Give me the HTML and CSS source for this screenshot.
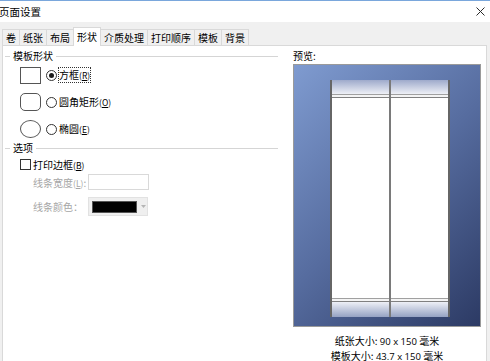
FILE: index.html
```html
<!DOCTYPE html>
<html lang="zh-CN">
<head>
    <meta charset="UTF-8">
    <title>页面设置</title>
    <link rel="stylesheet" href="styles.css">
</head>
<body>
    <div class="titlebar">
        <span class="title">页面设置</span>
        <svg class="close" viewBox="0 0 9 9" width="9" height="9">
            <path d="M0.5 0.5 L8.5 8.5 M8.5 0.5 L0.5 8.5" stroke="#2b2b2b" stroke-width="1" fill="none"/>
        </svg>
    </div>

    <div class="tabs">
        <span class="tab">卷</span>
        <span class="tab">纸张</span>
        <span class="tab">布局</span>
        <span class="tab active">形状</span>
        <span class="tab">介质处理</span>
        <span class="tab">打印顺序</span>
        <span class="tab">模板</span>
        <span class="tab">背景</span>
    </div>

    <div class="panel">
        <div class="left">
            <div class="group-title">模板形状</div>
            <div class="shapes">
                <div class="shape-row">
                    <span class="shape square"></span>
                    <span class="radio checked"></span>
                    <span class="label focus">方框<span class="key">(<u>R</u>)</span></span>
                </div>
                <div class="shape-row">
                    <span class="shape rounded"></span>
                    <span class="radio"></span>
                    <span class="label">圆角矩形<span class="key">(<u>O</u>)</span></span>
                </div>
                <div class="shape-row">
                    <span class="shape ellipse"></span>
                    <span class="radio"></span>
                    <span class="label">椭圆<span class="key">(<u>E</u>)</span></span>
                </div>
            </div>

            <div class="group-title options">选项</div>
            <div class="check-row">
                <span class="checkbox"></span>
                <span class="label">打印边框<span class="key">(<u>B</u>)</span></span>
            </div>
            <div class="field-row">
                <span class="field-label">线条宽度<span class="key">(<u>L</u>)</span>:</span>
                <span class="text-input"></span>
            </div>
            <div class="field-row color-row">
                <span class="field-label">线条颜色：</span>
                <span class="color-combo">
                    <span class="swatch"></span>
                    <svg class="arrow" viewBox="0 0 5 3" width="5" height="3">
                        <path d="M0 0 L2.5 3 L5 0 Z" fill="#b5b5b5"/>
                    </svg>
                </span>
            </div>
        </div>

        <div class="right">
            <div class="preview-label">预览:</div>
            <div class="preview">
                <div class="paper">
                    <div class="col">
                        <div class="strip-top"></div>
                        <div class="hline"></div>
                        <div class="sheet"></div>
                        <div class="hline"></div>
                        <div class="strip-bottom"></div>
                    </div>
                    <div class="divider"></div>
                    <div class="col">
                        <div class="strip-top"></div>
                        <div class="hline"></div>
                        <div class="sheet"></div>
                        <div class="hline"></div>
                        <div class="strip-bottom"></div>
                    </div>
                </div>
            </div>
            <div class="size-info">
                <div>纸张大小: <span class="num">90 x 150</span> 毫米</div>
                <div>模板大小: <span class="num">43.7 x 150</span> 毫米</div>
            </div>
        </div>
    </div>
</body>
</html>
```

FILE: styles.css
```css
body {
    margin: 0;
    height: 361px;
    overflow: hidden;
    background-color: #f0f0f0;
    font-family: "Noto Sans CJK SC", "DejaVu Sans", sans-serif;
    font-size: 10px;
    color: #000;
}

.titlebar {
    height: 21px;
    border-top: 1px solid #7aa7dc;
    background-color: #fff;
    display: flex;
    align-items: center;
    justify-content: space-between;
}

.title {
    font-size: 10.5px;
    line-height: 14px;
    margin-left: -1px;
}

.close {
    margin-right: 5px;
}

.tabs {
    display: flex;
    align-items: flex-end;
    height: 23px;
    padding-left: 3px;
}

.tab {
    height: 15px;
    line-height: 15px;
    padding: 0 3px;
    margin-left: -1px;
    font-size: 10px;
    border: 1px solid #d9d9d9;
    border-bottom: none;
    background-color: #f0f0f0;
}

.tab.active {
    height: 18px;
    line-height: 17px;
    margin-bottom: -1px;
    background-color: #fff;
    position: relative;
    z-index: 1;
}

.panel {
    display: flex;
    height: 330px;
    box-sizing: border-box;
    margin: 0 3px 0 2px;
    padding: 3px 0 0 2px;
    background-color: #fff;
    border: 1px solid #d9d9d9;
}

.left {
    width: 273px;
}

.group-title {
    display: flex;
    align-items: center;
    gap: 3px;
    height: 14px;
    line-height: 14px;
}

.group-title::before {
    content: "";
    width: 5px;
    border-top: 1px solid #d5d5d5;
}

.group-title::after {
    content: "";
    flex: 1;
    border-top: 1px solid #d5d5d5;
}

.group-title.options {
    margin-top: 3px;
}

.shapes {
    display: flex;
    flex-direction: column;
    gap: 9px;
    margin-top: 3px;
    padding-left: 15px;
}

.shape-row {
    display: flex;
    align-items: center;
    height: 18px;
}

.shape {
    width: 21px;
    height: 17px;
    box-sizing: border-box;
    border: 1px solid #555;
}

.shape.rounded {
    height: 18px;
    border-radius: 5px;
}

.shape.ellipse {
    height: 18px;
    border-radius: 50%;
}

.radio {
    width: 11px;
    height: 11px;
    box-sizing: border-box;
    margin-left: 5px;
    border: 1px solid #333;
    border-radius: 50%;
    display: flex;
    align-items: center;
    justify-content: center;
}

.radio.checked::after {
    content: "";
    width: 5px;
    height: 5px;
    border-radius: 50%;
    background-color: #1a1a1a;
}

.label {
    margin-left: 2px;
    line-height: 13px;
    white-space: nowrap;
}

.label.focus {
    outline: 1px dotted #333;
    outline-offset: 0;
}

.key {
    font-size: 8.5px;
}

.check-row {
    display: flex;
    align-items: center;
    height: 13px;
    margin-top: 3px;
    padding-left: 15px;
}

.checkbox {
    width: 11px;
    height: 11px;
    box-sizing: border-box;
    border: 1px solid #333;
}

.field-row {
    display: flex;
    align-items: center;
    margin-top: 3px;
    padding-left: 28px;
    color: #a6a6a6;
}

.field-label {
    width: 55px;
    white-space: nowrap;
}

.text-input {
    width: 61px;
    height: 16px;
    box-sizing: border-box;
    border: 1px solid #d9d9d9;
}

.color-row {
    margin-top: 7px;
}

.color-combo {
    display: flex;
    align-items: center;
    width: 60px;
    height: 19px;
    box-sizing: border-box;
    padding-left: 3px;
    background-color: #efefef;
    border: 1px solid #e2e2e2;
}

.swatch {
    width: 45px;
    height: 12px;
    background-color: #000;
    border: 1px solid #555;
    box-sizing: border-box;
}

.arrow {
    margin-left: 4px;
}

.right {
    width: 188px;
    margin-left: 15px;
}

.preview-label {
    height: 14px;
    line-height: 14px;
}

.preview {
    width: 188px;
    height: 263px;
    box-sizing: border-box;
    margin-top: 1px;
    padding: 15px 0 0 36px;
    border: 1px solid #9a9a9a;
    background: linear-gradient(135deg, #7f9bd0 0%, #566c9f 50%, #2c3a64 100%);
}

.paper {
    display: flex;
    width: 120px;
    height: 237px;
    box-sizing: border-box;
    border-left: 2px solid #666;
    border-right: 2px solid #666;
}

.col {
    flex: 1;
    display: flex;
    flex-direction: column;
}

.strip-top {
    height: 14px;
    background: linear-gradient(#9eaacb, #eef0f6);
}

.hline {
    height: 4px;
    box-sizing: border-box;
    background-color: #f4f4f4;
    border-top: 1px solid #a0a0a0;
    border-bottom: 1px solid #808080;
}

.sheet {
    flex: 1;
    background-color: #fff;
}

.strip-bottom {
    height: 15px;
    background: linear-gradient(#eef0f6, #95a2c3);
}

.divider {
    width: 2px;
    background-color: #7a7a7a;
}

.size-info {
    margin-top: 7px;
    text-align: center;
    line-height: 14px;
}

.num {
    font-family: "Open Sans", sans-serif;
    font-size: 9.5px;
}
```
